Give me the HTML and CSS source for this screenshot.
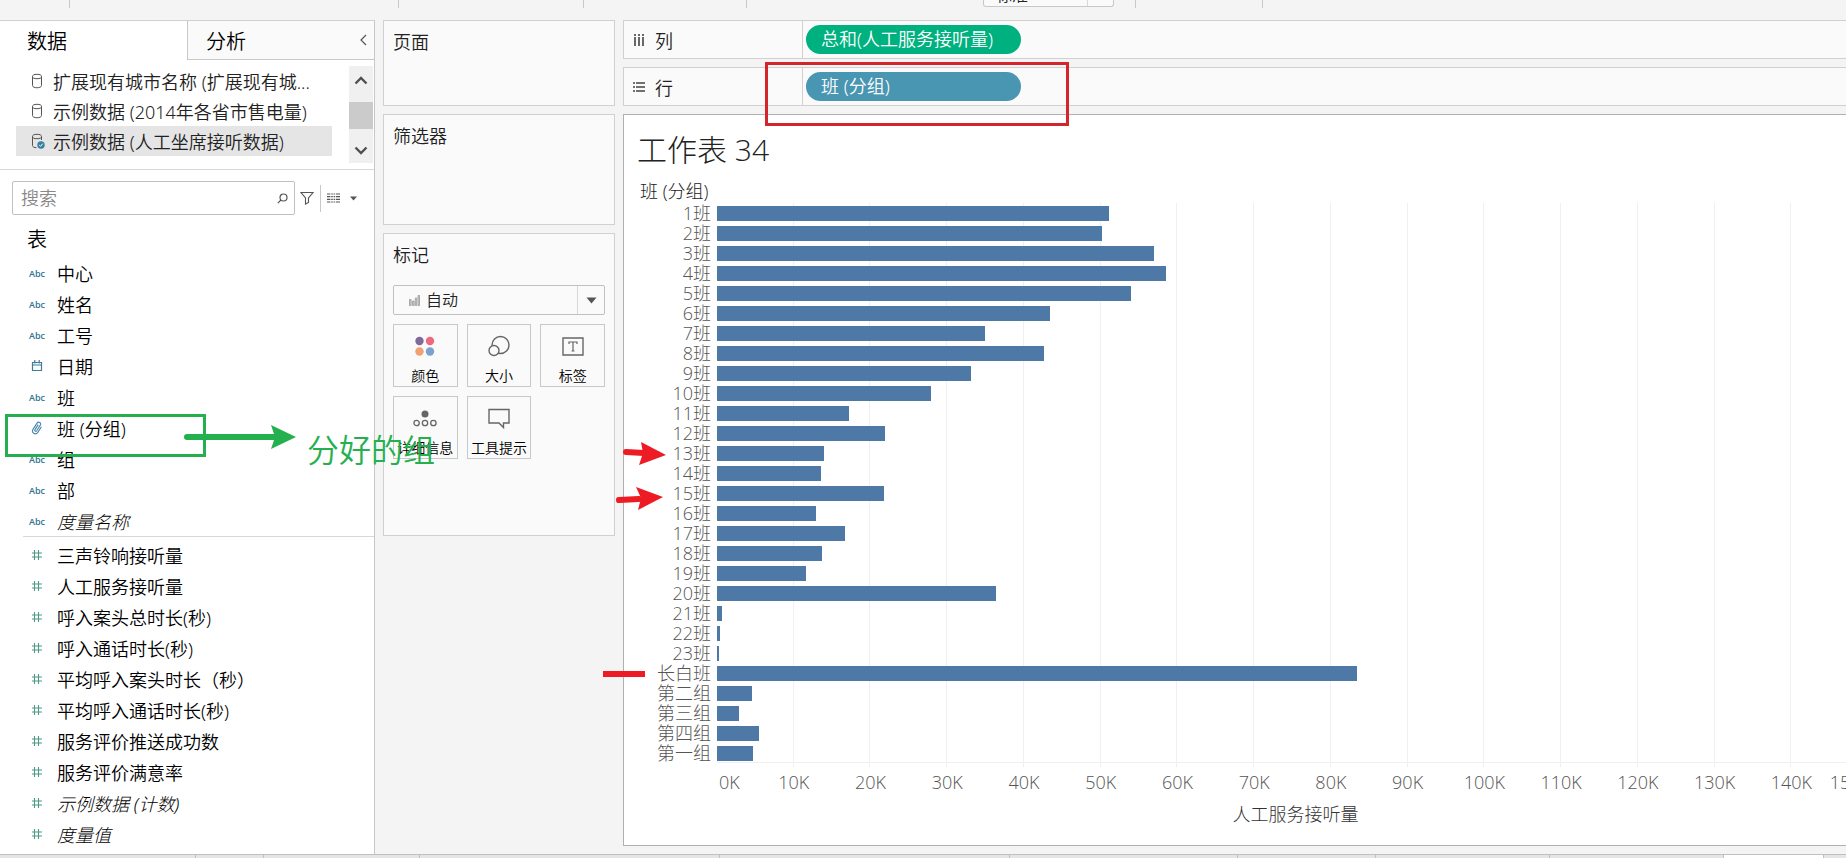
FILE: index.html
```html
<!DOCTYPE html>
<html lang="zh-CN">
<head>
<meta charset="utf-8">
<title>工作表 34</title>
<link rel="stylesheet" href="styles.css">
</head>
<body>
<svg class="defs" aria-hidden="true">
  <symbol id="db" viewBox="0 0 14 16"><g fill="none" stroke="#555" stroke-width="1"><ellipse cx="6" cy="3.5" rx="4.5" ry="2.2"/><path d="M1.500 3.500v9c0 3 9 3 9 0v-9"/></g></symbol>
  <symbol id="num" viewBox="0 0 12 12"><path d="M3.500 1v10M7.500 1v10M1 4h10M1 8h10" fill="none" stroke="#4c9a86" stroke-width="1.100"/></symbol>
</svg>

<header class="toolbar">
  <span class="sep s1"></span><span class="sep s2"></span><span class="sep s3"></span><span class="sep s4"></span>
  <div class="fit"><select aria-label="适合"><option>标准</option></select></div>
  <span class="sep s5"></span><span class="sep s6"></span>
</header>

<main class="workspace">
  <aside class="data-pane">
    <div class="tabs">
      <button class="tab active">数据</button>
      <button class="tab other">分析
        <svg width="8" height="12" viewBox="0 0 8 12"><path d="M6 1 1 6l5 5" fill="none" stroke="#555" stroke-width="1.200"/></svg>
      </button>
    </div>
    <div class="sources">
      <ul class="source-list">
        <li><svg width="14" height="16"><use href="#db"/></svg><span>扩展现有城市名称 (扩展现有城...</span></li>
        <li><svg width="14" height="16"><use href="#db"/></svg><span>示例数据 (2014年各省市售电量)</span></li>
        <li class="selected"><svg width="14" height="16" viewBox="0 0 14 16"><path d="M10.500 7V3.500v0M1.500 3.500v9c0 1.500 2 2.200 4 2.200" fill="none" stroke="#555"/><ellipse cx="6" cy="3.500" rx="4.500" ry="2.200" fill="none" stroke="#555"/><circle cx="10" cy="12" r="3.700" fill="#37809e"/><path d="m8.200 12 1.300 1.300 2.200-2.600" fill="none" stroke="#fff"/></svg><span>示例数据 (人工坐席接听数据)</span></li>
      </ul>
      <div class="scroll">
        <svg width="14" height="9" viewBox="0 0 14 9"><path d="m1.500 7.500 5.500-5.500 5.500 5.500" fill="none" stroke="#505050" stroke-width="2.400"/></svg>
        <span class="thumb"></span>
        <svg width="14" height="9" viewBox="0 0 14 9"><path d="m1.500 1.500 5.500 5.500 5.500-5.500" fill="none" stroke="#505050" stroke-width="2.400"/></svg>
      </div>
    </div>
    <div class="search-row">
      <div class="search">
        <input type="text" placeholder="搜索" aria-label="搜索">
        <svg width="11" height="11" viewBox="0 0 11 11"><circle cx="6.500" cy="4.500" r="3.500" fill="none" stroke="#555" stroke-width="1.200"/><path d="M4 7 .8 10.200" stroke="#555" stroke-width="1.200"/></svg>
      </div>
      <svg class="funnel" width="14" height="14" viewBox="0 0 14 14"><path d="M1 1.500h12L8.500 7v4.500L5.500 13V7z" fill="none" stroke="#555" stroke-width="1.100"/></svg>
      <span class="vline"></span>
      <svg width="13" height="10" viewBox="0 0 13 10"><path d="M0 1h13M0 3.600h13M0 6.300h13M0 9h13" stroke="#555" stroke-width="1.200" stroke-dasharray="3.400 .8 1.600 .8 1.600 .8 4"/></svg>
      <svg class="caret" width="7" height="5" viewBox="0 0 7 5"><path d="M0 .5h7L3.500 4.500z" fill="#555"/></svg>
    </div>
    <h2 class="table-title">表</h2>
    <ul class="fields dims">
      <li><i>Abc</i>中心</li>
      <li><i>Abc</i>姓名</li>
      <li><i>Abc</i>工号</li>
      <li><i><svg width="12" height="12" viewBox="0 0 12 12"><path d="M1.500 2.500h9v8h-9zM1.500 5h9M3.800 0v3.500M8.200 0v3.500" fill="none" stroke="#3c7d9c" stroke-width="1.200"/></svg></i>日期</li>
      <li><i>Abc</i>班</li>
      <li><i><svg width="12" height="14" viewBox="0 0 12 14"><path d="M7.200 3.600 4 8.600c-.8 1.300.8 2.400 1.700 1.100l3.600-5.600c1.300-2.200-1.800-4.200-3.300-2L2 8.400c-2 3.300 2.600 6.200 4.800 3l3.600-5.700" fill="none" stroke="#4a87ad" stroke-width="1.100"/></svg></i>班 (分组)</li>
      <li><i>Abc</i>组</li>
      <li><i>Abc</i>部</li>
      <li class="gen"><i>Abc</i><em>度量名称</em></li>
    </ul>
    <ul class="fields measures">
      <li><i><svg width="12" height="12"><use href="#num"/></svg></i>三声铃响接听量</li>
      <li><i><svg width="12" height="12"><use href="#num"/></svg></i>人工服务接听量</li>
      <li><i><svg width="12" height="12"><use href="#num"/></svg></i>呼入案头总时长(秒)</li>
      <li><i><svg width="12" height="12"><use href="#num"/></svg></i>呼入通话时长(秒)</li>
      <li><i><svg width="12" height="12"><use href="#num"/></svg></i>平均呼入案头时长（秒）</li>
      <li><i><svg width="12" height="12"><use href="#num"/></svg></i>平均呼入通话时长(秒)</li>
      <li><i><svg width="12" height="12"><use href="#num"/></svg></i>服务评价推送成功数</li>
      <li><i><svg width="12" height="12"><use href="#num"/></svg></i>服务评价满意率</li>
      <li class="gen"><i><svg width="12" height="12"><use href="#num"/></svg></i><em>示例数据 (计数)</em></li>
      <li class="gen"><i><svg width="12" height="12"><use href="#num"/></svg></i><em>度量值</em></li>
    </ul>
  </aside>

  <section class="cards">
    <div class="card pages"><h3>页面</h3></div>
    <div class="card filters"><h3>筛选器</h3></div>
    <div class="card marks">
      <h3>标记</h3>
      <div class="mark-type">
        <svg class="bars-icon" width="11" height="11" viewBox="0 0 11 11"><g fill="#ccc" stroke="#999" stroke-width=".8"><path d="M.5 4.500h1.600v6H.5zM3.500 6h1.600v4.500H3.500zM6.300 3h1.400v7.500H6.300zM9 .5h1.500v10H9z"/></g></svg>
        <select aria-label="标记类型"><option>自动</option></select>
        <span class="drop"><svg width="11" height="7" viewBox="0 0 11 7"><path d="M.5.5h10l-5 6z" fill="#555"/></svg></span>
      </div>
      <div class="mark-grid">
        <button><svg width="24" height="24" viewBox="0 0 24 24"><circle cx="6.500" cy="7" r="4.200" fill="#806a99"/><circle cx="17" cy="7" r="4.200" fill="#f0687f"/><circle cx="6.500" cy="17.500" r="4.200" fill="#f2a070"/><circle cx="17" cy="17.500" r="4.200" fill="#7ba2cb"/></svg><span>颜色</span></button>
        <button><svg width="24" height="24" viewBox="0 0 24 24"><g fill="#fafafa" stroke="#666" stroke-width="1.400"><circle cx="13.500" cy="11" r="8.500"/><circle cx="7" cy="16.500" r="5"/></g></svg><span>大小</span></button>
        <button><svg width="24" height="24" viewBox="0 0 24 24"><path d="M2 4h20v17H2z" fill="none" stroke="#666" stroke-width="1.400"/><path d="M8 10V8h8v2M12 8v9M10.500 17h3" fill="none" stroke="#666" stroke-width="1.200"/></svg><span>标签</span></button>
        <button><svg width="24" height="24" viewBox="0 0 24 24"><circle cx="12" cy="8" r="3.500" fill="#666"/><g fill="none" stroke="#666" stroke-width="1.300"><circle cx="3.600" cy="17" r="2.700"/><circle cx="12" cy="17" r="2.700"/><circle cx="20.400" cy="17" r="2.700"/></g></svg><span>详细信息</span></button>
        <button><svg width="24" height="24" viewBox="0 0 24 24"><path d="M2 3.500h20v13.500h-5.500v4.500L12 17H2z" fill="none" stroke="#666" stroke-width="1.400"/></svg><span>工具提示</span></button>
      </div>
    </div>
  </section>

  <section class="view">
    <div class="shelf">
      <div class="shelf-name"><svg width="12" height="12" viewBox="0 0 12 12"><path d="M2 0v2M6 0v2M10 0v2M2 3v9M6 3v9M10 3v9" stroke="#444" stroke-width="1.600"/></svg>列</div>
      <div class="shelf-body"><span class="pill green">总和(人工服务接听量)</span></div>
    </div>
    <div class="shelf">
      <div class="shelf-name"><svg width="12" height="12" viewBox="0 0 12 12"><path d="M0 2h2M0 6h2M0 10h2M3 2h9M3 6h9M3 10h9" stroke="#444" stroke-width="1.600"/></svg>行</div>
      <div class="shelf-body"><span class="pill blue">班 (分组)</span></div>
    </div>
    <div class="sheet">
      <h1>工作表 34</h1>
      <div class="row-head">班 (分组)</div>
      <div class="chart">
        <ol class="labels">
          <li>1班</li><li>2班</li><li>3班</li><li>4班</li><li>5班</li><li>6班</li><li>7班</li><li>8班</li><li>9班</li><li>10班</li><li>11班</li><li>12班</li><li>13班</li><li>14班</li><li>15班</li><li>16班</li><li>17班</li><li>18班</li><li>19班</li><li>20班</li><li>21班</li><li>22班</li><li>23班</li><li>长白班</li><li>第二组</li><li>第三组</li><li>第四组</li><li>第一组</li>
        </ol>
        <div class="plot">
          <div class="grid" aria-hidden="true"><b></b><b></b><b></b><b></b><b></b><b></b><b></b><b></b><b></b><b></b><b></b><b></b><b></b><b></b></div>
          <div class="bars">
            <span style="width:34.72%"></span>
            <span style="width:34.1%"></span>
            <span style="width:38.71%"></span>
            <span style="width:39.77%"></span>
            <span style="width:36.67%"></span>
            <span style="width:29.5%"></span>
            <span style="width:23.74%"></span>
            <span style="width:28.96%"></span>
            <span style="width:22.5%"></span>
            <span style="width:18.95%"></span>
            <span style="width:11.69%"></span>
            <span style="width:14.88%"></span>
            <span style="width:9.48%"></span>
            <span style="width:9.21%"></span>
            <span style="width:14.79%"></span>
            <span style="width:8.77%"></span>
            <span style="width:11.34%"></span>
            <span style="width:9.3%"></span>
            <span style="width:7.88%"></span>
            <span style="width:24.71%"></span>
            <span style="width:.44%"></span>
            <span style="width:.27%"></span>
            <span style="width:.18%"></span>
            <span style="width:56.69%"></span>
            <span style="width:3.1%"></span>
            <span style="width:1.95%"></span>
            <span style="width:3.72%"></span>
            <span style="width:3.19%"></span>
          </div>
        </div>
        <div class="axis"><span class="zero">0K</span><span>10K</span><span>20K</span><span>30K</span><span>40K</span><span>50K</span><span>60K</span><span>70K</span><span>80K</span><span>90K</span><span>100K</span><span>110K</span><span>120K</span><span>130K</span><span>140K</span><span class="last">150K</span></div>
        <div class="axis-title">人工服务接听量</div>
      </div>
    </div>
  </section>
</main>

<footer class="sheet-tabs"><span class="w195"></span><span class="w68"></span><span class="w156"></span><span class="w300"></span><span class="w290"></span><span class="w228"></span><span class="w138"></span><span class="w174"></span><span class="w174"></span><span class="w100 current"></span></footer>

<div class="box green-box"></div>
<div class="box red-box"></div>
<div class="note">分好的组</div>
<svg class="ink" viewBox="0 0 700 700" width="700" height="700" aria-hidden="true">
  <path d="M187 437h90" stroke="#24b04f" stroke-width="6" stroke-linecap="round"/>
  <path d="m271 425 25 12-25 12 4-12z" fill="#24b04f"/>
  <path d="m626 452 18 1" stroke="#ed1c24" stroke-width="6" stroke-linecap="round"/>
  <path d="m641 442 25 13-27 10 4-12z" fill="#ed1c24"/>
  <path d="m619 500 20-1" stroke="#ed1c24" stroke-width="6" stroke-linecap="round"/>
  <path d="m636 487 27 10-25 13 3-12z" fill="#ed1c24"/>
  <path d="M603 674h42" stroke="#ed1c24" stroke-width="6"/>
</svg>
</body>
</html>
```

FILE: styles.css
```css
* { box-sizing: border-box; }
body {
  margin: 0;
  height: 100vh;
  display: flex;
  flex-direction: column;
  overflow: hidden;
  position: relative;
  background: #f4f4f4;
  color: #222;
  font-family: "Noto Sans", "Noto Sans CJK SC", sans-serif;
  font-size: 18px;
  font-weight: 350;
}
ul, ol { list-style: none; margin: 0; padding: 0; }
h1, h2, h3 { margin: 0; font-weight: 350; }
button, input, select { font: inherit; color: inherit; }
svg { flex: none; }
.defs { position: absolute; width: 0; height: 0; }

/* toolbar */
.toolbar { display: flex; height: 20px; flex: none; }
.sep { width: 1px; height: 8px; background: #c8c8c8; flex: none; }
.s1 { margin-left: 69px; }
.s2 { margin-left: 328px; }
.s3 { margin-left: 184px; }
.s4 { margin-left: 162px; }
.s5 { margin-left: 21px; }
.s6 { margin-left: 126px; }
.fit {
  margin-left: 236px;
  width: 131px;
  height: 7px;
  display: flex;
  align-items: flex-end;
  overflow: hidden;
  border: 1px solid #c8c8c8;
  border-top: 0;
  border-radius: 0 0 3px 3px;
  background: linear-gradient(#d8d8d8, #d8d8d8) 103px 0 / 1px 100% no-repeat #fafafa;
}
.fit select {
  appearance: none;
  border: 0;
  background: none;
  width: 100%;
  height: 22px;
  padding: 0 12px;
  font-size: 16px;
  line-height: 22px;
}

.workspace { flex: 1; display: flex; min-height: 0; }

/* data pane */
.data-pane {
  width: 375px;
  flex: none;
  background: #fff;
  border-top: 1px solid #d0d0d0;
  border-right: 1px solid #c8c8c8;
}
.tabs { display: flex; height: 39px; }
.tab {
  border: 0;
  background: none;
  padding: 0 0 0 27px;
  text-align: left;
  font-size: 20px;
  color: #000;
}
.tab.active { width: 187px; }
.tab.other {
  flex: 1;
  display: flex;
  align-items: center;
  justify-content: space-between;
  padding: 0 6px 0 18px;
  background: #fafafa;
  border-left: 1px solid #c8c8c8;
  border-bottom: 1px solid #c8c8c8;
}
.sources {
  display: flex;
  justify-content: space-between;
  padding: 6px 1px 6px 16px;
  border-bottom: 1px solid #d8d8d8;
}
.source-list { width: 316px; }
.source-list li {
  display: flex;
  align-items: center;
  gap: 8px;
  height: 30px;
  padding: 0 0 1px 15px;
  white-space: nowrap;
}
.source-list .selected { background: #e5e5e5; }
.scroll {
  width: 24px;
  height: 97px;
  display: flex;
  flex-direction: column;
  align-items: center;
  justify-content: space-between;
  padding: 10px 0 8px;
  background: #f0f0f0;
}
.thumb { width: 24px; height: 27px; background: #cbcbcb; }
.search-row {
  display: flex;
  align-items: center;
  gap: 6px;
  padding: 11px 12px 0;
}
.search {
  width: 283px;
  height: 34px;
  display: flex;
  align-items: center;
  padding: 0 6px 0 8px;
  border: 1px solid #c0c0c0;
  border-radius: 2px;
}
.search input { flex: 1; min-width: 0; border: 0; outline: 0; padding: 0; background: none; }
.search input::placeholder { color: #888; opacity: 1; }
.funnel { margin-left: -1px; }
.vline { width: 1px; height: 27px; background: #c8c8c8; }
.caret { margin-left: 4px; }
.table-title {
  padding: 9px 0 0 27px;
  height: 43px;
  line-height: 32px;
  font-size: 20px;
  color: #000;
}
.fields li {
  display: flex;
  align-items: center;
  gap: 11px;
  height: 31px;
  padding: 0 0 1px 28px;
  color: #000;
}
.fields i {
  width: 18px;
  display: flex;
  justify-content: center;
  font: 600 9px "Open Sans", sans-serif;
  color: #2f7391;
}
.fields .gen { font-weight: 300; }
.dims { background: linear-gradient(#d8d8d8, #d8d8d8) 23px 100% / 100% 1px no-repeat; }
.measures { padding-top: 3px; }

/* cards */
.cards {
  width: 248px;
  flex: none;
  padding: 0 0 0 8px;
  display: flex;
  flex-direction: column;
  gap: 8px;
}
.card { width: 232px; border: 1px solid #d0d0d0; background: #fafafa; padding: 7px 9px; }
.card h3 { font-size: 18px; line-height: 28px; }
.pages { height: 86px; }
.filters { height: 111px; }
.marks { height: 303px; }
.mark-type {
  position: relative;
  height: 30px;
  margin: 16px 0 9px;
  display: flex;
  border: 1px solid #c0c0c0;
  border-radius: 2px;
}
.mark-type select {
  appearance: none;
  flex: 1;
  border: 0;
  background: none;
  padding: 0 0 0 32px;
  font-size: 16px;
}
.bars-icon { position: absolute; left: 15px; top: 9px; }
.drop {
  position: absolute;
  inset: 0 0 0 auto;
  width: 27px;
  display: grid;
  place-items: center;
  border-left: 1px solid #d8d8d8;
  pointer-events: none;
}
.mark-grid { display: grid; grid-template-columns: repeat(3, 1fr); gap: 9px; }
.mark-grid button {
  height: 63px;
  padding: 9px 0 0;
  display: flex;
  flex-direction: column;
  align-items: center;
  gap: 8px;
  border: 1px solid #c8c8c8;
  background: #fafafa;
  color: #000;
  font-size: 14px;
  line-height: 20px;
  white-space: nowrap;
}

/* shelves and sheet */
.view { flex: 1; min-width: 0; display: flex; flex-direction: column; gap: 8px; padding-bottom: 8px; }
.shelf {
  height: 39px;
  flex: none;
  display: flex;
  border: 1px solid #d0d0d0;
  border-right: 0;
  background: #fafafa;
}
.shelf-name { width: 178px; display: flex; align-items: center; gap: 10px; padding-left: 9px; }
.shelf-body { flex: 1; border-left: 1px solid #d0d0d0; padding: 4px 3px; }
.pill {
  display: block;
  width: 215px;
  height: 29px;
  padding-left: 15px;
  border-radius: 15px;
  line-height: 28px;
  color: #fff;
}
.pill.green { background: #00b180; }
.pill.blue { background: #4996b2; }
.sheet {
  flex: 1;
  border: 1px solid #b0b0b0;
  border-right: 0;
  background: #fff;
  font-family: "Open Sans", "Noto Sans CJK SC", sans-serif;
  font-weight: 300;
}
.sheet h1 { padding: 14px 0 0 13px; font-size: 30px; font-weight: 300; line-height: 42px; }
.row-head { padding: 9px 0 0 16px; height: 32px; line-height: 22px; }
.chart { display: grid; grid-template-columns: 93px minmax(0, 1fr); color: #555; }
.labels { padding: 0 6px 0 0; text-align: right; }
.labels li { height: 20px; line-height: 20px; }
.plot { display: grid; height: 564px; overflow: hidden; }
.grid, .bars { grid-area: 1 / 1; }
.grid { display: flex; background: linear-gradient(#f0f0f0, #f0f0f0) 0 559px / 100% 1px no-repeat; }
.grid b { width: 6.798%; flex: none; border-right: 1px solid #f0f0f0; }
.bars { display: flex; flex-direction: column; gap: 5px; padding-top: 3px; }
.bars span { height: 15px; background: #4e79a7; }
.axis { grid-column: 2; display: flex; overflow: hidden; height: 30px; line-height: 30px; }
.axis span { width: 6.798%; flex: none; text-align: center; white-space: nowrap; }
.axis .zero { width: 3.399%; padding-left: 2px; text-align: left; }
.axis .last { text-align: left; }
.axis-title { grid-column: 2; padding: 5px 0 0 28px; line-height: 24px; text-align: center; color: #333; }

/* sheet tabs */
.sheet-tabs { flex: none; display: flex; height: 4px; border-top: 1px solid #c0c0c0; background: #e5e5e5; }
.sheet-tabs span { border-right: 1px solid #c0c0c0; flex: none; }
.w195 { width: 196px; }
.w68 { width: 68px; }
.w156 { width: 156px; }
.w300 { width: 300px; }
.w290 { width: 290px; }
.w228 { width: 228px; }
.w138 { width: 138px; }
.w174 { width: 174px; }
.w100 { width: 100px; }
.current { background: #fff; }

/* annotations drawn over the workspace */
.box { position: absolute; border: 3px solid #24b04f; pointer-events: none; }
.green-box { left: 5px; top: 414px; width: 201px; height: 43px; }
.red-box { left: 765px; top: 62px; width: 304px; height: 64px; border-color: #d4242c; }
.note { position: absolute; left: 307px; top: 427px; font-size: 32px; line-height: 46px; color: #24b04f; }
.ink { position: absolute; left: 0; top: 0; pointer-events: none; }
```
